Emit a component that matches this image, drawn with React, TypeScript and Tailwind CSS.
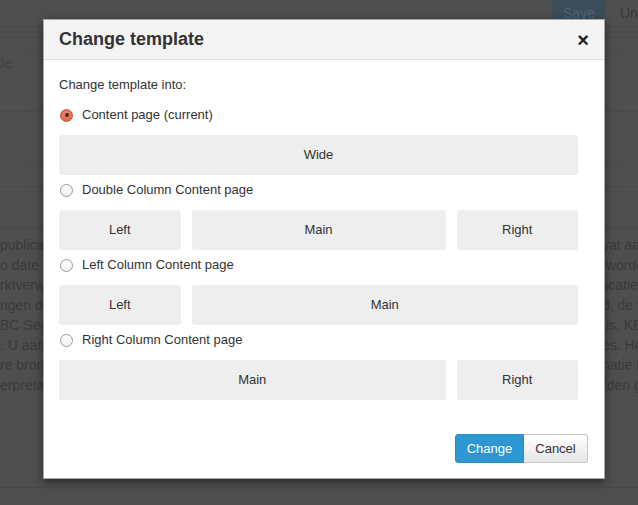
import React from "react";

const leftFrags = ["publicat", "o date e", "rktverw", "ngen on", "BC Secu", ". U aan", "re bronn", "erpretati"];
const rightFrags = ["vat aan", " worde", "licatie", "d, de v", " is. KB", "es. Ho", "natie K", "rden g"];

function Radio({ checked }: { checked?: boolean }) {
  if (checked) {
    return (
      <span className="flex h-[13px] w-[13px] items-center justify-center rounded-full border border-[#c0553a] bg-[radial-gradient(circle_at_50%_35%,#f08a68,#dd5f3e)]">
        <span className="h-[4px] w-[4px] rounded-full bg-[#5b2315]" />
      </span>
    );
  }
  return <span className="h-[13px] w-[13px] rounded-full border border-[#9a9a9a] bg-[linear-gradient(#ffffff,#f0f0f0)]" />;
}

function Box({ children, className = "" }: { children: React.ReactNode; className?: string }) {
  return (
    <div className={`flex h-[40px] items-center justify-center rounded-[3px] bg-[#eeeeee] text-[13px] text-[#333333] ${className}`}>
      {children}
    </div>
  );
}

function Option({ label, checked, children }: { label: string; checked?: boolean; children: React.ReactNode }) {
  return (
    <div className="pb-[4px]">
      <div className="flex h-[20px] items-center gap-[9px] pl-[1px] pt-[2px] text-[13px] text-[#333333]">
        <Radio checked={checked} />
        <span>{label}</span>
      </div>
      <div className="mt-[11px] grid grid-cols-12 gap-x-[11px]">{children}</div>
    </div>
  );
}

export default function App() {
  return (
    <div
      className="relative h-[505px] w-[638px] overflow-hidden bg-[#4f4f4f]"
      style={{ fontFamily: '"Liberation Sans", Arial, sans-serif' }}
    >
      {/* dimmed background page */}
      <div className="flex h-full flex-col">
        <div className="flex h-[27px] justify-end border-b border-[#484848]">
          <div className="flex w-[54px] items-center justify-center bg-[#3b4d58] text-[14px] text-[#4f6472]">Save</div>
          <div className="flex w-[32px] items-center pl-[14px] text-[14px] text-[#383838]">Unpublish</div>
        </div>
        <div className="h-[11px] border-b border-[#484848]" />
        <div className="h-[12px] border-b border-[#4a4a4a]" />
        <div className="flex h-[26px] items-center text-[15px] text-[#414141]">
          <span className="-ml-[15px]">Title</span>
        </div>
        <div className="h-[36px] border-b border-[#4a4a4a]" />
        <div className="h-[50px] border-b border-[#4a4a4a]" />
        <div className="h-[25px] border-b border-[#4a4a4a]" />
        <div className="h-[42px] border-b border-[#494949]" />
        <div className="mt-[6px] flex flex-col text-[14px] leading-[20px] text-[#3a3a3a]">
          {leftFrags.map((l, i) => (
            <div key={i} className="flex justify-between whitespace-pre">
              <span>{l}</span>
              <span className="w-[36px] overflow-hidden">{rightFrags[i]}</span>
            </div>
          ))}
        </div>
        <div className="mt-[92px] border-b border-[#484848]" />
      </div>

      {/* modal */}
      <div className="absolute left-[43px] top-[19px] flex h-[460px] w-[562px] flex-col border border-[#a8a8a8] bg-white shadow-[0_3px_9px_rgba(0,0,0,0.5)]">
        <div className="flex h-[40px] shrink-0 items-center justify-between border-b border-[#dddddd] bg-[#f4f4f4] pl-[15px] pr-[15px]">
          <span className="text-[18px] font-bold text-[#333333]">Change template</span>
          <span className="text-[20px] font-bold leading-none text-[#222222]">×</span>
        </div>
        <div className="flex-1 pl-[15px] pr-[26px] pt-[15px]">
          <div className="flex h-[20px] items-center text-[13px] text-[#333333]">Change template into:</div>
          <div className="pt-[9px]">
            <Option label="Content page (current)" checked>
              <Box className="col-span-12">Wide</Box>
            </Option>
            <Option label="Double Column Content page">
              <Box className="col-span-3">Left</Box>
              <Box className="col-span-6">Main</Box>
              <Box className="col-span-3">Right</Box>
            </Option>
            <Option label="Left Column Content page">
              <Box className="col-span-3">Left</Box>
              <Box className="col-span-9">Main</Box>
            </Option>
            <Option label="Right Column Content page">
              <Box className="col-span-9">Main</Box>
              <Box className="col-span-3">Right</Box>
            </Option>
          </div>
        </div>
        <div className="flex justify-end pb-[15px] pr-[16px]">
          <button className="flex h-[29px] w-[69px] items-center justify-center rounded-l-[3px] border border-[#2a8fc5] bg-[#2c97d0] text-[13px] text-white">
            Change
          </button>
          <button className="flex h-[29px] w-[64px] items-center justify-center rounded-r-[3px] border border-l-0 border-[#c6c6c6] bg-[linear-gradient(#ffffff,#e6e6e6)] text-[13px] text-[#333333]">
            Cancel
          </button>
        </div>
      </div>
    </div>
  );
}
